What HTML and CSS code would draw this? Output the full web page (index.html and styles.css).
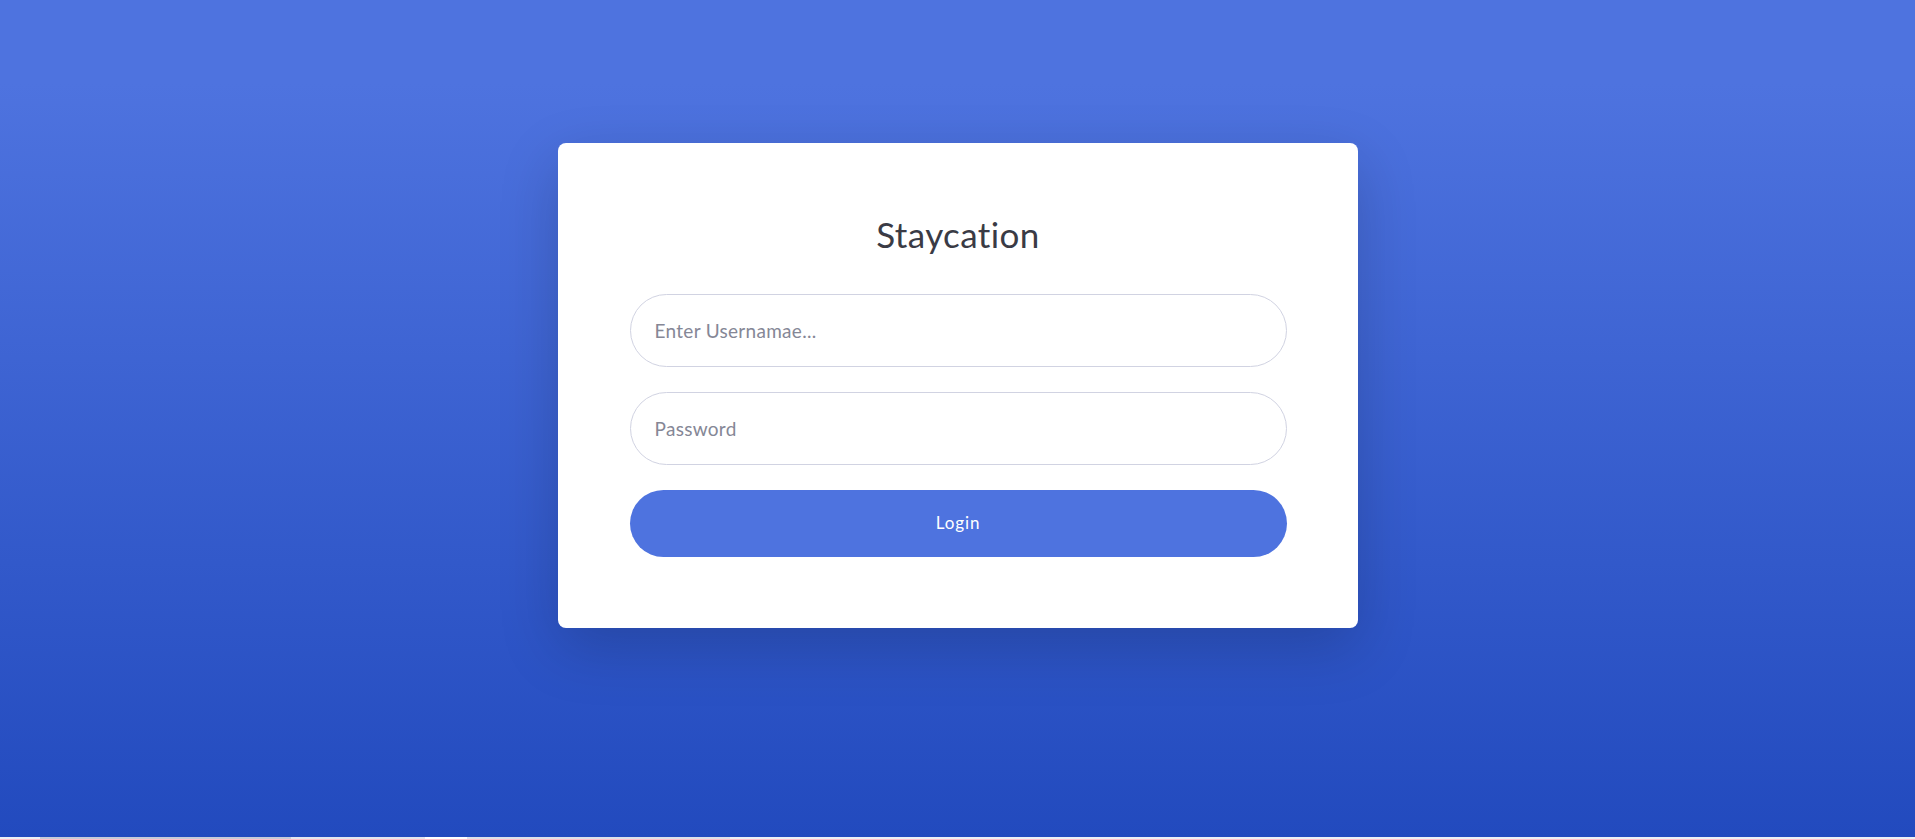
FILE: index.html
```html
<!DOCTYPE html>
<html lang="en">
<head>
<meta charset="utf-8">
<title>Staycation - Login</title>
<link rel="stylesheet" href="styles.css">
</head>
<body>
<div class="page">
  <main class="login-card">
    <h1 class="login-title">Staycation</h1>
    <form class="login-form">
      <input class="field" type="text" placeholder="Enter Usernamae...">
      <input class="field" type="password" placeholder="Password">
      <button class="btn-login" type="button">Login</button>
    </form>
  </main>
</div>
<div class="bottom-strip"></div>
</body>
</html>
```

FILE: styles.css
```css
html, body {
  margin: 0;
  padding: 0;
  height: 100%;
}

body {
  font-family: "Lato", "Noto Sans", sans-serif;
  display: flex;
  flex-direction: column;
  overflow: hidden;
  background: #d9dbe3;
}

.page {
  height: 837px;
  flex: none;
  background-color: #4e73df;
  background-image: linear-gradient(180deg, #4e73df 10%, #224abe 100%);
  display: flex;
  justify-content: center;
  align-items: flex-start;
  padding-top: 143px;
  box-sizing: border-box;
}

.bottom-strip {
  height: 2px;
  background: linear-gradient(90deg, #eef0f5 0 40px, #c8cbd8 40px 291px, #e4e6ee 291px 425px, #ffffff 425px 467px, #dfe1e9 467px 730px, #eef0f5 730px);
}

.login-card {
  width: 800px;
  box-sizing: border-box;
  background: #ffffff;
  border-radius: 8px;
  padding: 71px 71px 71px 72px;
  box-shadow: 0 20px 60px rgba(0, 0, 0, 0.175);
  display: flex;
  flex-direction: column;
}

.login-title {
  margin: 0 0 40px;
  font-size: 35px;
  line-height: 40px;
  font-weight: 400;
  letter-spacing: 0.4px;
  color: #3a3b45;
  text-align: center;
}

.login-form {
  display: flex;
  flex-direction: column;
  gap: 25px;
}

.field {
  height: 73px;
  box-sizing: border-box;
  border: 1px solid #d1d3e2;
  border-radius: 40px;
  padding: 0 24px;
  font-family: inherit;
  font-size: 19px;
  letter-spacing: 0.3px;
  color: #6e707e;
  background: #ffffff;
  outline: none;
}

.field::placeholder {
  color: #858796;
  opacity: 1;
}

.btn-login {
  height: 67px;
  border: none;
  border-radius: 40px;
  background: #4e73df;
  color: #ffffff;
  font-family: inherit;
  font-size: 17px;
  letter-spacing: 0.9px;
  padding: 0 0 2px;
  cursor: pointer;
}
```
